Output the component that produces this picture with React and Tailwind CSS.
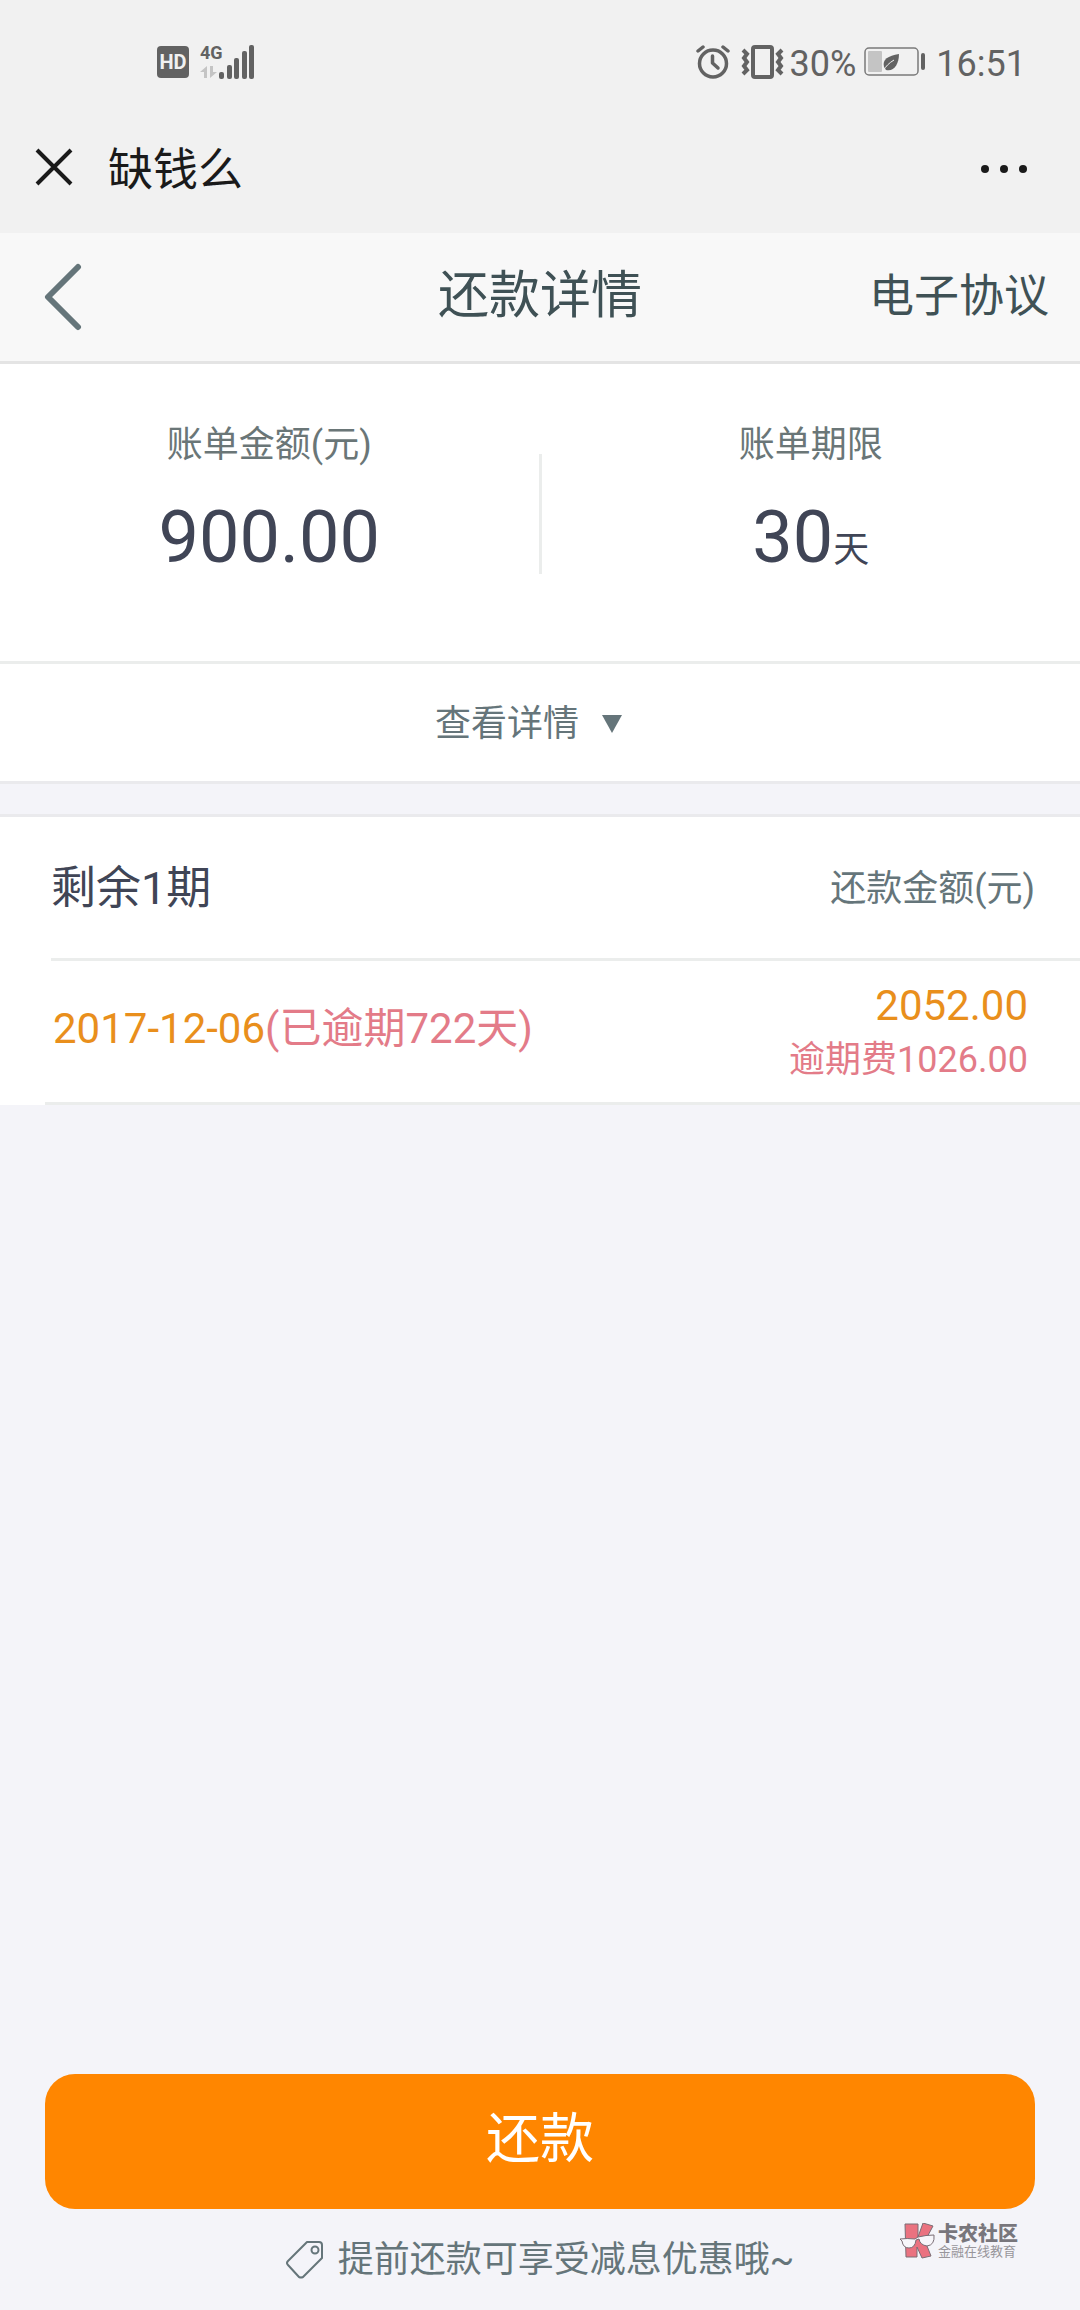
import React, { useState } from 'react';

const bill = {
  amount: '900.00',
  days: 30,
  remaining: 1,
};

const plans = [
  { id: 1, date: '2017-12-06', overdueDays: 722, amount: '2052.00', fee: '1026.00' },
];

const SignalIcon = () => (
  <svg width="98" height="54" viewBox="0 -10 98 54" fill="#626262" aria-hidden="true">
    <rect x="0" y="1" width="32" height="32" rx="4" />
    <text x="16" y="24" fontSize="20" fontWeight="700" textAnchor="middle" fill="#f1f1f1">HD</text>
    <text x="43" y="14" fontSize="18" fontWeight="700">4G</text>
    <path d="M43 27L50 21V33H47V27ZM53 21H56V27H60L53 33Z" fill="#c4c4c4" />
    <rect x="62" y="27" width="5" height="7" rx="2" />
    <rect x="70" y="20" width="5" height="14" rx="2" />
    <rect x="77" y="13" width="5" height="21" rx="2" />
    <rect x="85" y="6" width="5" height="28" rx="2" />
    <rect x="92" y="0" width="5" height="34" rx="2" />
  </svg>
);

const AlarmIcon = () => (
  <svg width="34" height="34" viewBox="0 0 34 34" fill="none" stroke="#626262" strokeLinecap="round" aria-hidden="true">
    <circle cx="17" cy="18.500" r="13.500" strokeWidth="3.500" />
    <path d="M16.500 11V18L22 23" strokeWidth="3.500" strokeLinejoin="round" />
    <path d="M2 6L7 2M32 6L27 2" strokeWidth="3.500" />
  </svg>
);

const VibrateIcon = () => (
  <svg width="43" height="34" viewBox="0 0 43 34" fill="none" stroke="#626262" strokeWidth="4" aria-hidden="true">
    <rect x="12" y="2" width="19" height="30" rx="2" />
    <path d="M2 5L6 9L3 13L6 17L3 21L6 25L2 29" />
    <path d="M41 5L37 9L40 13L37 17L40 21L37 25L41 29" />
  </svg>
);

const BatteryIcon = () => (
  <svg width="62" height="30" viewBox="0 0 62 30" aria-hidden="true">
    <rect x="1" y="1" width="53" height="27" rx="4" fill="none" stroke="#7a7a7a" strokeWidth="1.500" />
    <rect x="4" y="4" width="14" height="21" rx="1" fill="#c4c4c4" />
    <path d="M20 20C18 12 24 9 35 7C35 17 30 25 22 23Z" fill="#626262" />
    <path d="M19 24C22 19 25 16 30 13" stroke="#f1f1f1" strokeWidth="1" fill="none" />
    <rect x="57" y="6" width="4" height="17" rx="2" fill="#626262" />
  </svg>
);

const TagIcon = () => (
  <svg width="38" height="38" viewBox="0 0 38 38" fill="none" stroke="#65757a" strokeWidth="2" aria-hidden="true">
    <path d="M21 1H33Q36 1 36 4V17L17 36Q15 37 13 36L2 24Q0 22 2 20Z" strokeLinejoin="round" />
    <circle cx="29" cy="9" r="3.500" />
  </svg>
);

const Watermark = () => (
  <div className="absolute right-[62px] top-[14px] flex items-center gap-[3px]">
    <svg width="35" height="36" viewBox="0 0 35 36" fill="#ea7280" stroke="#7a6d75" strokeWidth="1" aria-hidden="true">
      <path d="M5 1H18V14L23 0L33 3L25 18L31 33L22 35L17 24V34H6Z" />
      <path
        d="M0 16Q7 15 15 16L18 14Q26 12 34 12Q35 22 27 23Q20 22 19 16L16 17Q15 25 9 25Q3 25 2 18Z"
        fill="#f7f6fa"
      />
    </svg>
    <div className="text-[#78767c]">
      <p className="text-[20px] font-black leading-[22px]">卡农社区</p>
      <p className="text-[13px] leading-[14px] text-[#98969b]">金融在线教育</p>
    </div>
  </div>
);

const StatusBar = () => (
  <div className="flex h-[124px] items-center justify-between pl-[157px] pr-[54px] text-[#626262]">
    <SignalIcon />
    <div className="flex items-center text-[36px] leading-none">
      <AlarmIcon />
      <span className="ml-[11px]">
        <VibrateIcon />
      </span>
      <span className="ml-[6px] pt-[3px]">30%</span>
      <span className="ml-2">
        <BatteryIcon />
      </span>
      <span className="ml-[10px] pt-[3px]">16:51</span>
    </div>
  </div>
);

const App = () => {
  const [open, setOpen] = useState(false);

  return (
    <div className="flex min-h-screen flex-col bg-[#f4f4f9] font-[Roboto,'Noto_Sans_CJK_SC',sans-serif] text-[#404556]">
      <div className="bg-[#f1f1f1] pb-[23px]">
        <StatusBar />
        <div className="flex h-[86px] items-center pl-[35px] pr-[52px] text-[#1a1a1a]">
          <button type="button" aria-label="关闭">
            <svg width="38" height="38" viewBox="0 0 38 38" stroke="currentColor" strokeWidth="4" aria-hidden="true">
              <path d="M2 2L36 36M36 2L2 36" />
            </svg>
          </button>
          <h1 className="ml-[35px] pt-[6px] text-[45px] font-normal leading-none">缺钱么</h1>
          <button type="button" aria-label="更多" className="ml-auto pt-1">
            <svg width="48" height="10" viewBox="0 0 48 10" fill="currentColor" aria-hidden="true">
              <circle cx="5" cy="5" r="4" />
              <circle cx="24" cy="5" r="4" />
              <circle cx="43" cy="5" r="4" />
            </svg>
          </button>
        </div>
      </div>

      <header className="grid h-[131px] grid-cols-[1fr_auto_1fr] items-center border-b-[3px] border-[#e4e4e4] bg-[#f8f8f8] px-[31px] text-[#3f5155]">
        <button type="button" aria-label="返回" className="justify-self-start pl-[13px] text-[#65757a]">
          <svg width="38" height="68" viewBox="0 0 38 68" fill="none" stroke="currentColor" strokeWidth="6" strokeLinecap="round" strokeLinejoin="round" aria-hidden="true">
            <path d="M34 4L4 34L34 64" />
          </svg>
        </button>
        <h2 className="pb-[3px] text-[51px] leading-[60px]">还款详情</h2>
        <a href="#agreement" className="justify-self-end text-[45px] leading-[60px]">电子协议</a>
      </header>

      <main className="flex flex-1 flex-col">
        <section className="bg-white">
          <div className="flex items-start border-b-[3px] border-[#ebedec] pb-[81px] pt-[51px] text-center">
            <div className="flex-1">
              <p className="text-[36px] leading-[60px] text-[#6a7677]">账单金额(元)</p>
              <p className="mt-[21px] text-[72px] leading-[84px]">{bill.amount}</p>
            </div>
            <div className="mt-[39px] h-[120px] w-[3px] bg-[#ebedec]" />
            <div className="flex-1">
              <p className="text-[36px] leading-[60px] text-[#6a7677]">账单期限</p>
              <p className="mt-[21px] text-[72px] leading-[84px]">
                {bill.days}
                <span className="text-[36px] leading-none">天</span>
              </p>
            </div>
          </div>
          <button
            type="button"
            aria-expanded={open}
            onClick={() => setOpen(!open)}
            className="flex h-[120px] w-full items-center justify-center border-b-[3px] border-[#eaeaed] pt-[2px] text-[36px] text-[#65757a]"
          >
            查看详情
            <svg width="20" height="18" viewBox="0 0 20 18" fill="currentColor" className="mx-[23px]" aria-hidden="true">
              <path d="M0 0H20L10 18Z" />
            </svg>
          </button>
        </section>

        <section className="mt-[30px] border-t-[3px] border-[#eaeaed] bg-white">
          <div className="ml-[51px] flex h-36 items-center justify-between border-b-[3px] border-[#ebedec] pr-[45px] pt-[2px]">
            <h3 className="text-[45px] leading-[60px]">剩余{bill.remaining}期</h3>
            <span className="text-[36px] leading-[60px] text-[#65757a]">还款金额(元)</span>
          </div>
          <ul>
            {plans.map((plan) => (
              <li
                key={plan.id}
                className="ml-[45px] flex h-36 items-center justify-between border-b-[3px] border-[#ebedec] pl-2 pr-[52px] pt-[2px]"
              >
                <p className="pb-2 text-[42px] leading-[54px] text-[#e98f1c]">
                  {plan.date}
                  <span className="text-[#e37b88]">(已逾期{plan.overdueDays}天)</span>
                </p>
                <div className="text-right">
                  <p className="text-[42px] leading-[54px] text-[#e98f1c]">{plan.amount}</p>
                  <p className="text-[36px] leading-[54px] text-[#e37b88]">逾期费{plan.fee}</p>
                </div>
              </li>
            ))}
          </ul>
        </section>

        <footer className="mt-auto px-[45px]">
          <button type="button" className="h-[135px] w-full rounded-[30px] bg-[#ff8600] pb-1 text-[54px] text-white">
            还款
          </button>
        </footer>
        <div className="relative flex h-[101px] items-center justify-center gap-[14px] text-[36px] text-[#65757a]">
          <TagIcon />
          <p>提前还款可享受减息优惠哦~</p>
          <Watermark />
        </div>
      </main>
    </div>
  );
};

export default App;
